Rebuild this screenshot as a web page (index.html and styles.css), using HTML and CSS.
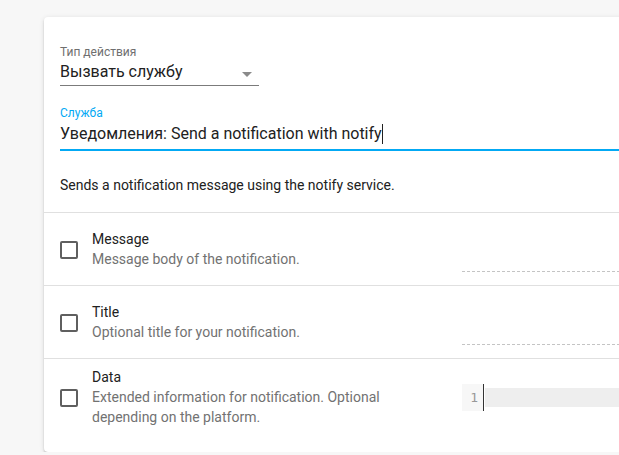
FILE: index.html
```html
<!DOCTYPE html>
<html lang="ru">
<head>
  <meta charset="UTF-8" />
  <meta name="viewport" content="width=device-width, initial-scale=1.0">
  <title>Действие</title>
  <link rel="stylesheet" href="styles.css">
</head>
<body>
  <div class="card">
    <div class="fields">
      <div class="select">
        <div class="label">Тип действия</div>
        <div class="select-value">
          <span>Вызвать службу</span>
          <span class="arrow"></span>
        </div>
      </div>

      <div class="service">
        <div class="label label-active">Служба</div>
        <div class="service-value">Уведомления: Send a notification with notify<span class="caret"></span></div>
      </div>

      <p class="description">Sends a notification message using the notify service.</p>
    </div>

    <div class="row">
      <span class="checkbox"></span>
      <div class="text">
        <div class="name">Message</div>
        <div class="hint">Message body of the notification.</div>
      </div>
      <div class="input-dashed"></div>
    </div>

    <div class="row">
      <span class="checkbox"></span>
      <div class="text">
        <div class="name">Title</div>
        <div class="hint">Optional title for your notification.</div>
      </div>
      <div class="input-dashed"></div>
    </div>

    <div class="row row-data">
      <span class="checkbox"></span>
      <div class="text">
        <div class="name">Data</div>
        <div class="hint">Extended information for notification. Optional depending on the platform.</div>
      </div>
      <div class="editor">
        <div class="gutter">1</div>
        <span class="editor-caret"></span>
        <div class="active-line"></div>
      </div>
    </div>
  </div>
</body>
</html>
```

FILE: styles.css
```css
body {
  margin: 0;
  background: #f7f7f7;
  font-family: Roboto, 'Noto Sans', sans-serif;
  color: #212121;
  overflow: hidden;
}

.card {
  margin: 17px 0 0 44px;
  width: 640px;
  background: #fff;
  border-radius: 4px;
  box-shadow: 0 2px 2px 0 rgba(0, 0, 0, 0.14), 0 1px 5px 0 rgba(0, 0, 0, 0.12), 0 3px 1px -2px rgba(0, 0, 0, 0.2);
}

.fields {
  padding: 28px 16px 17px;
}

.select {
  width: 199px;
}

.label {
  font-size: 12px;
  line-height: 14px;
  color: #6f6f6f;
}

.label-active {
  color: #03a9f4;
}

.select-value {
  display: flex;
  justify-content: space-between;
  align-items: center;
  margin-top: 3px;
  padding-bottom: 3px;
  border-bottom: 1px solid #7b7b7b;
  font-size: 16px;
  line-height: 20px;
}

.arrow {
  width: 0;
  height: 0;
  margin: 4px 7px 0 0;
  border-left: 5px solid transparent;
  border-right: 5px solid transparent;
  border-top: 5px solid #8a8a8a;
}

.service {
  margin-top: 20px;
}

.service-value {
  margin-top: 4px;
  padding-bottom: 5px;
  border-bottom: 2px solid #03a9f4;
  font-size: 16px;
  line-height: 20px;
  white-space: nowrap;
}

.caret {
  display: inline-block;
  width: 1px;
  height: 20px;
  background: #212121;
  vertical-align: top;
}

.description {
  margin: 24px 0 0;
  font-size: 14px;
  line-height: 20px;
}

.row {
  display: flex;
  align-items: center;
  padding: 16px;
  border-top: 1px solid #e0e0e0;
}

.row-data {
  padding-top: 8px;
  padding-bottom: 25px;
}

.checkbox {
  flex: none;
  width: 14px;
  height: 14px;
  margin: 2px 14px 0 0;
  border: 2px solid #5f5f5f;
  border-radius: 2px;
}

.text {
  flex: 0 0 350px;
  margin-right: 20px;
  font-size: 14px;
  line-height: 20px;
}

.hint {
  color: #727272;
}

.input-dashed {
  flex: 1;
  align-self: flex-end;
  height: 40px;
  margin-bottom: -3px;
  background: repeating-linear-gradient(to right, #c4c4c4 0 3px, transparent 3px 5px) left bottom / 100% 1px no-repeat;
}

.editor {
  flex: 1;
  display: flex;
  align-items: center;
  height: 27px;
}

.gutter {
  width: 16px;
  height: 27px;
  padding-right: 5px;
  background: #f7f7f7;
  color: #999;
  font-family: 'DejaVu Sans Mono', monospace;
  font-size: 13px;
  line-height: 27px;
  text-align: right;
}

.editor-caret {
  width: 1px;
  height: 27px;
  margin-right: 1px;
  background: #333;
}

.active-line {
  flex: 1;
  height: 19px;
  background: #eee;
}
```
